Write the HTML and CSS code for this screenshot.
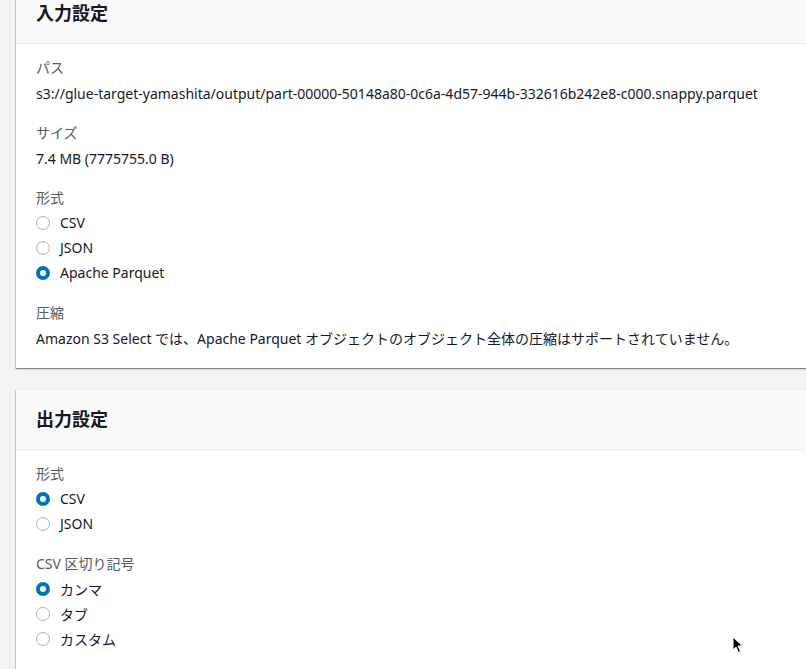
FILE: index.html
```html
<!doctype html>
<html>
  <head>
    <meta charset="utf-8">
    <title>S3 Select</title>
    <link rel="stylesheet" href="styles.css">
  </head>
  <body>
    <main id="page">
      <section class="panel panel-first">
        <header class="panel-header">
          <h2>入力設定</h2>
        </header>
        <div class="panel-body">
          <div class="field">
            <div class="field-label">パス</div>
            <div class="field-value">s3://glue-target-yamashita/output/part-00000-50148a80-0c6a-4d57-944b-332616b242e8-c000.snappy.parquet</div>
          </div>
          <div class="field">
            <div class="field-label">サイズ</div>
            <div class="field-value">7.4 MB (7775755.0 B)</div>
          </div>
          <div class="field">
            <div class="field-label">形式</div>
            <label class="radio"><input type="radio" name="in-format"> CSV</label>
            <label class="radio"><input type="radio" name="in-format"> JSON</label>
            <label class="radio"><input type="radio" name="in-format" checked> Apache Parquet</label>
          </div>
          <div class="field">
            <div class="field-label">圧縮</div>
            <div class="field-value">Amazon S3 Select では、Apache Parquet オブジェクトのオブジェクト全体の圧縮はサポートされていません。</div>
          </div>
        </div>
      </section>

      <section class="panel panel-last">
        <header class="panel-header">
          <h2>出力設定</h2>
        </header>
        <div class="panel-body">
          <div class="field">
            <div class="field-label">形式</div>
            <label class="radio"><input type="radio" name="out-format" checked> CSV</label>
            <label class="radio"><input type="radio" name="out-format"> JSON</label>
          </div>
          <div class="field">
            <div class="field-label">CSV 区切り記号</div>
            <label class="radio"><input type="radio" name="delim" checked> カンマ</label>
            <label class="radio"><input type="radio" name="delim"> タブ</label>
            <label class="radio"><input type="radio" name="delim"> カスタム</label>
          </div>
        </div>
      </section>
    </main>

    <!-- mouse pointer caught in the screenshot -->
    <svg class="pointer" width="12" height="18" viewBox="0 0 12 18">
      <path d="M1 1 L1 14 L4 11 L6.5 16.5 L8.5 15.5 L6 10 L10.5 10 Z" fill="#000" stroke="#fff" stroke-width="1"/>
    </svg>
  </body>
</html>
```

FILE: styles.css
```css
* {
  box-sizing: border-box;
}

html, body {
  background: #f2f3f3;
  font-family: "Noto Sans", "Noto Sans CJK JP", sans-serif;
  font-size: 14px;
  color: #16191f;
  margin: 0;
  height: 100%;
  overflow: hidden;
}

#page {
  display: flex;
  flex-direction: column;
  gap: 21px;
  padding-left: 16px;
  margin-right: -20px;
}

.panel {
  background: #fff;
  border-top: 1px solid #eaeded;
  box-shadow: 0 1px 1px 0 rgba(0, 28, 36, 0.3),
              1px 1px 1px 0 rgba(0, 28, 36, 0.15),
              -1px 1px 1px 0 rgba(0, 28, 36, 0.15);
}

.panel-first {
  margin-top: -17px;
}

.panel-header {
  background: #fafafa;
  border-bottom: 1px solid #eaeded;
  padding: 18px 20px 19px;
}

.panel-header h2 {
  margin: 0;
  font-size: 18px;
  line-height: 22px;
  font-weight: bold;
}

.panel-body {
  display: flex;
  flex-direction: column;
  gap: 17px;
  padding: 13px 20px 18px;
}

.panel-last .panel-body {
  padding-bottom: 60px;
}

.field {
  display: flex;
  flex-direction: column;
}

.field-label {
  color: #545b64;
  line-height: 22px;
  margin-bottom: 1px;
}

.field-label + .field-value {
  margin-top: 3px;
}

.field-value {
  line-height: 22px;
}

.radio {
  display: flex;
  align-items: center;
  gap: 10px;
  height: 25px;
}

.radio input {
  appearance: none;
  -webkit-appearance: none;
  margin: 0;
  width: 14px;
  height: 14px;
  border-radius: 50%;
  border: 1px solid #aab7b8;
  background: #fff;
}

.radio input:checked {
  border: 4px solid #0073bb;
}

.pointer {
  position: absolute;
  left: 732px;
  top: 636px;
}
```
